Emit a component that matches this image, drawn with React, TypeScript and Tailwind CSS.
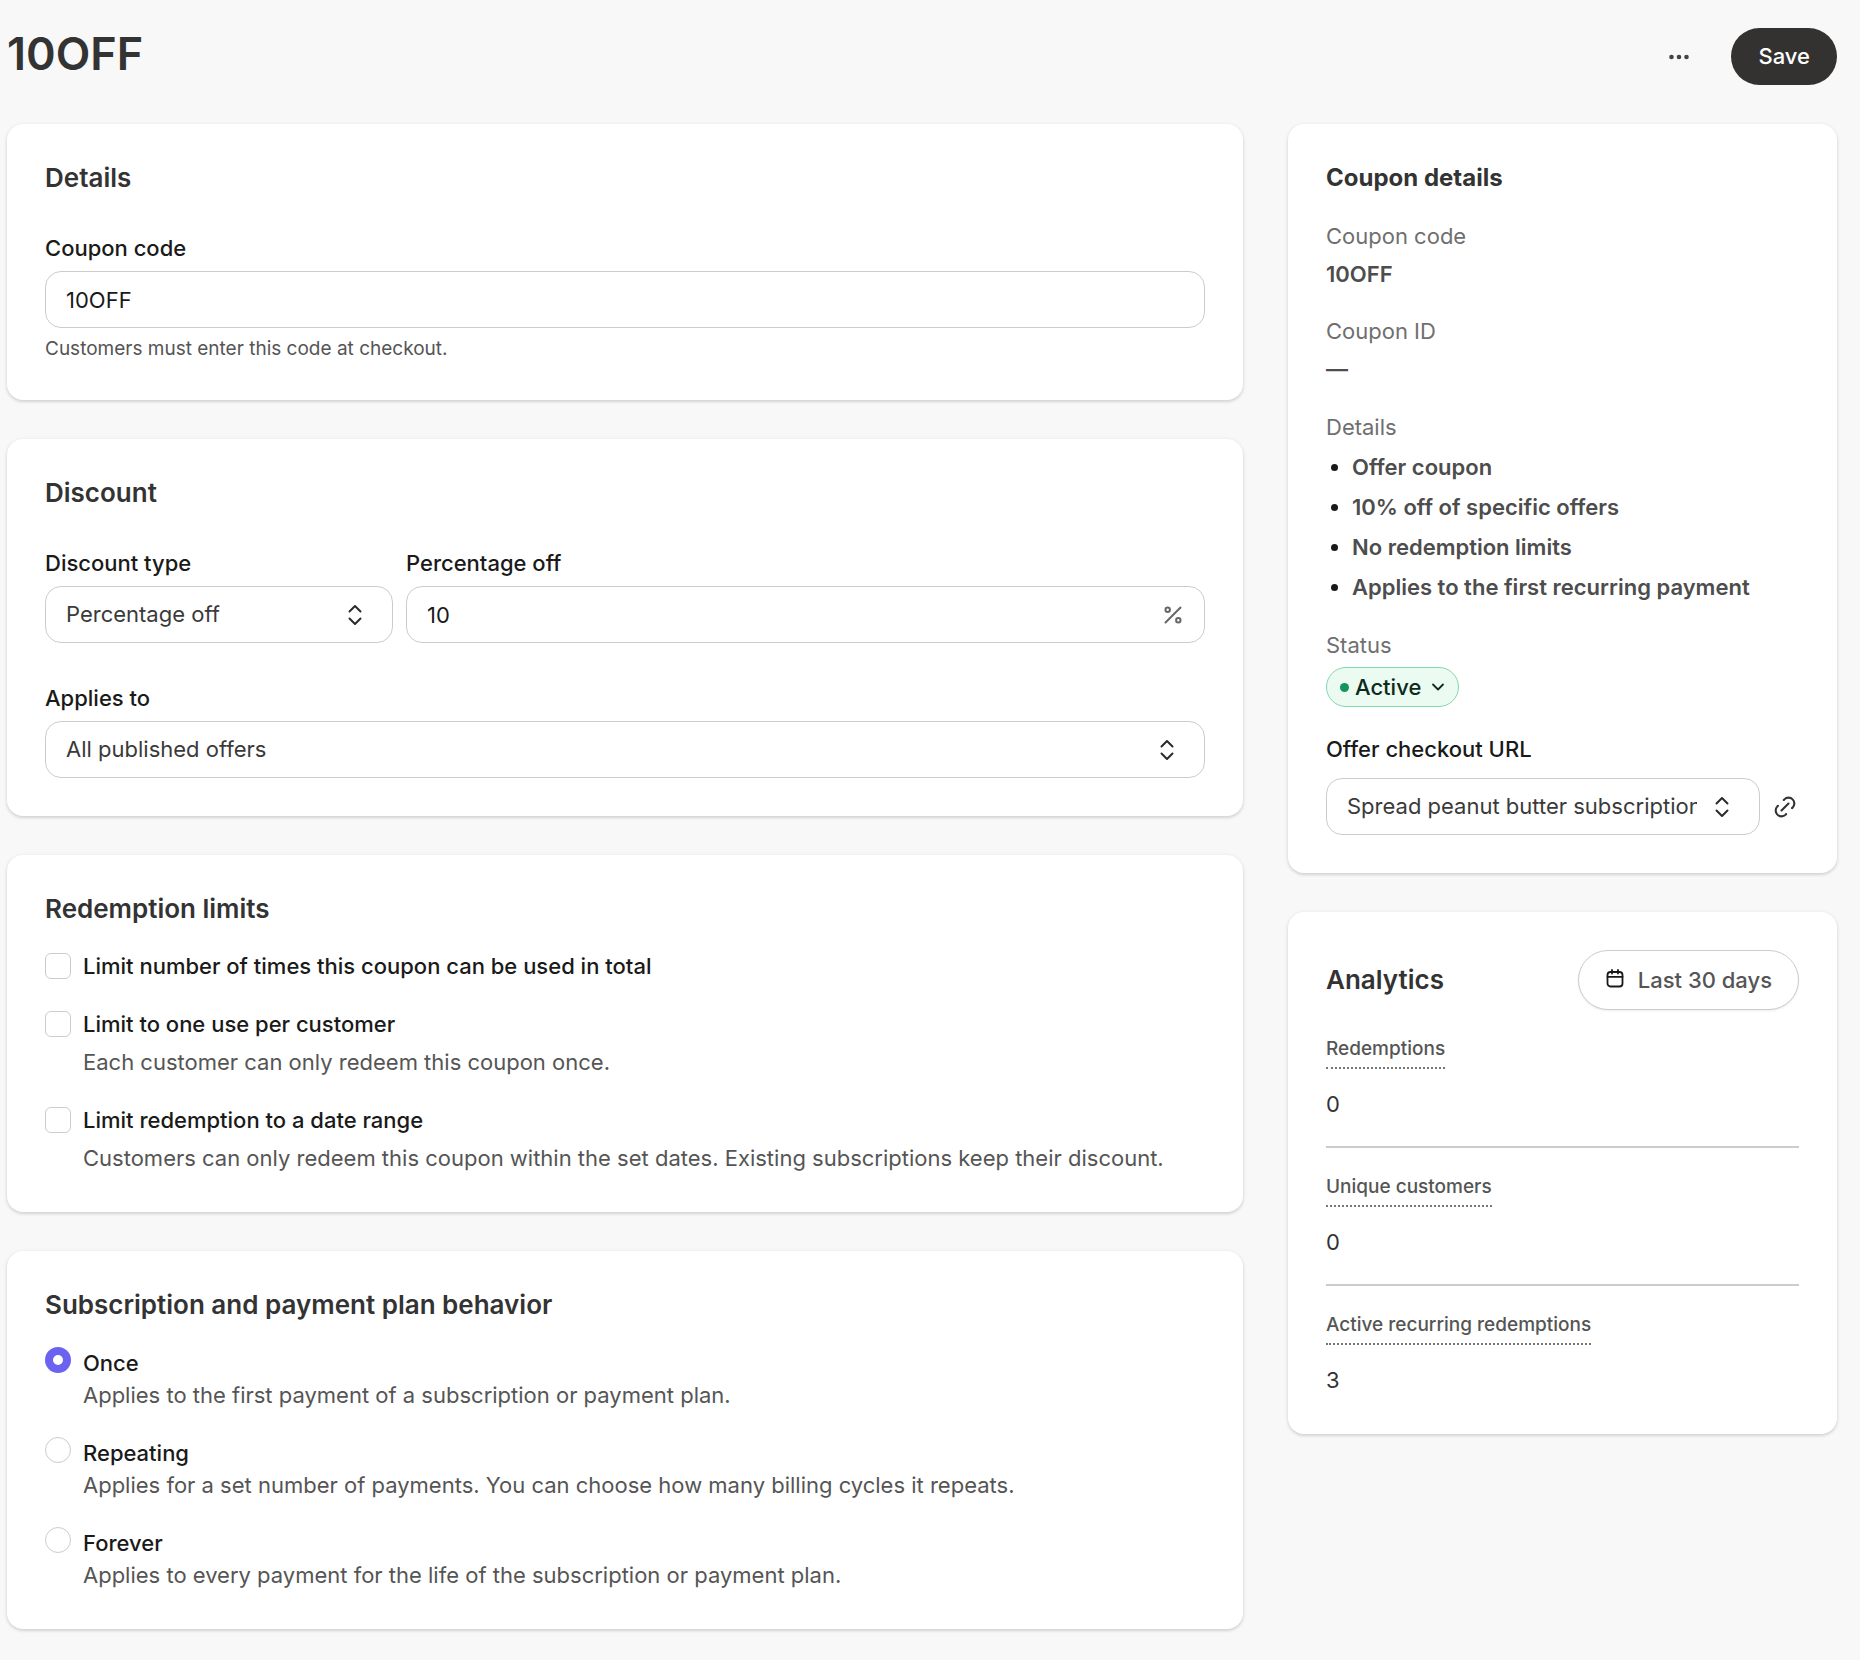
import { useState } from "react";
import type { ReactNode } from "react";

function Card({ children }: { children: ReactNode }) {
  return (
    <section className="rounded-2xl bg-white p-[38px] shadow-[0_1px_4px_rgba(0,0,0,0.11),0_2px_3px_rgba(0,0,0,0.08)]">
      {children}
    </section>
  );
}

function Heading({ children }: { children: ReactNode }) {
  return <h2 className="text-[26px] leading-8 font-semibold text-[#333333]">{children}</h2>;
}

function UpDown() {
  return (
    <svg width="16" height="22" viewBox="0 0 16 22" fill="none" stroke="#2b2b2b" strokeWidth="2" strokeLinecap="round" strokeLinejoin="round" aria-hidden="true">
      <path d="M2.5 7.5 8 2l5.5 5.5M2.5 14.500 8 20l5.500-5.500" />
    </svg>
  );
}

function SelectBox({ id, options }: { id: string; options: string[] }) {
  return (
    <div className="relative">
      <select
        id={id}
        className="block h-[57px] w-full appearance-none rounded-2xl border border-[#cccccc] bg-white pr-[62px] pl-5 text-[22px] text-[#3a3a3a]"
      >
        {options.map((o) => (
          <option key={o}>{o}</option>
        ))}
      </select>
      <span className="pointer-events-none absolute inset-y-0 right-[30px] flex items-center">
        <UpDown />
      </span>
    </div>
  );
}

const labelClass = "block text-[22px] leading-8 font-medium text-[#1a1a1a]";

const limits = [
  { id: "limit-total", label: "Limit number of times this coupon can be used in total", hint: "" },
  { id: "limit-customer", label: "Limit to one use per customer", hint: "Each customer can only redeem this coupon once." },
  {
    id: "limit-dates",
    label: "Limit redemption to a date range",
    hint: "Customers can only redeem this coupon within the set dates. Existing subscriptions keep their discount.",
  },
];

const durations = [
  { id: "once", label: "Once", hint: "Applies to the first payment of a subscription or payment plan." },
  { id: "repeating", label: "Repeating", hint: "Applies for a set number of payments. You can choose how many billing cycles it repeats." },
  { id: "forever", label: "Forever", hint: "Applies to every payment for the life of the subscription or payment plan." },
];

const metrics = [
  { label: "Redemptions", value: "0" },
  { label: "Unique customers", value: "0" },
  { label: "Active recurring redemptions", value: "3" },
];

const facts = ["Offer coupon", "10% off of specific offers", "No redemption limits", "Applies to the first recurring payment"];

export default function App() {
  const [duration, setDuration] = useState("once");
  const muted = "text-[22px] leading-8 text-[#6f6f6f]";
  const strong = "text-[22px] leading-8 font-semibold text-[#4d4d4d]";

  return (
    <div className="min-h-screen bg-[#f8f8f8] pt-7 pr-[23px] pb-8 pl-[7px] font-['Inter',sans-serif] text-[#1a1a1a]">
      <header className="flex items-start justify-between">
        <h1 className="text-[45px] leading-[52px] font-semibold text-[#333333]">10OFF</h1>
        <div className="flex items-center gap-6">
          <button type="button" aria-label="More actions" className="flex h-[57px] w-14 items-center justify-center">
            <svg width="22" height="6" viewBox="0 0 22 6" fill="#444444" aria-hidden="true">
              <circle cx="3.500" cy="3" r="2.300" />
              <circle cx="11" cy="3" r="2.300" />
              <circle cx="18.500" cy="3" r="2.300" />
            </svg>
          </button>
          <button type="button" className="h-[57px] rounded-full bg-[#333230] px-[27px] text-[22px] font-medium text-white">
            Save
          </button>
        </div>
      </header>

      <main className="mt-[39px] flex items-start gap-[45px]">
        <div className="flex min-w-0 flex-1 flex-col gap-[39px]">
          <Card>
            <Heading>Details</Heading>
            <label htmlFor="code" className={labelClass + " mt-[38px]"}>
              Coupon code
            </label>
            <input
              id="code"
              type="text"
              defaultValue="10OFF"
              className="mt-[7px] block h-[57px] w-full rounded-2xl border border-[#cccccc] bg-white px-5 text-[22px]"
            />
            <p className="mt-2 text-[19px] leading-[26px] text-[#555555]">Customers must enter this code at checkout.</p>
          </Card>

          <Card>
            <Heading>Discount</Heading>
            <div className="mt-[38px] flex gap-[13px]">
              <div className="w-[30%]">
                <label htmlFor="type" className={labelClass + " mb-[7px]"}>
                  Discount type
                </label>
                <SelectBox id="type" options={["Percentage off", "Fixed amount"]} />
              </div>
              <div className="flex-1">
                <label htmlFor="amount" className={labelClass + " mb-[7px]"}>
                  Percentage off
                </label>
                <div className="relative">
                  <input
                    id="amount"
                    type="text"
                    defaultValue="10"
                    className="block h-[57px] w-full rounded-2xl border border-[#cccccc] bg-white pr-14 pl-5 text-[22px]"
                  />
                  <span className="pointer-events-none absolute inset-y-0 right-[22px] flex items-center">
                    <svg width="20" height="20" viewBox="0 0 20 20" fill="none" stroke="#666666" strokeWidth="2" strokeLinecap="round" aria-hidden="true">
                      <path d="M2.500 17.500 17.500 2.500" />
                      <circle cx="4.700" cy="4.700" r="2.200" />
                      <circle cx="15.300" cy="15.300" r="2.200" />
                    </svg>
                  </span>
                </div>
              </div>
            </div>
            <label htmlFor="applies" className={labelClass + " mt-[39px] mb-[7px]"}>
              Applies to
            </label>
            <SelectBox id="applies" options={["All published offers", "Specific offers"]} />
          </Card>

          <Card>
            <Heading>Redemption limits</Heading>
            <div className="mt-[25px] flex flex-col gap-[26px]">
              {limits.map((l) => (
                <div key={l.id} className="flex gap-3">
                  <input
                    id={l.id}
                    type="checkbox"
                    className="mt-[3px] size-[26px] shrink-0 appearance-none rounded-md border border-[#cccccc] bg-white checked:border-[#6b63f0] checked:bg-[#6b63f0]"
                  />
                  <div>
                    <label htmlFor={l.id} className={labelClass}>
                      {l.label}
                    </label>
                    {l.hint && <p className="mt-[6px] text-[22px] leading-8 text-[#555555]">{l.hint}</p>}
                  </div>
                </div>
              ))}
            </div>
          </Card>

          <Card>
            <Heading>Subscription and payment plan behavior</Heading>
            <div className="mt-[26px] flex flex-col gap-[26px]">
              {durations.map((d) => (
                <div key={d.id} className="flex gap-3">
                  <input
                    id={d.id}
                    type="radio"
                    name="duration"
                    checked={duration === d.id}
                    onChange={() => setDuration(d.id)}
                    className="size-[26px] shrink-0 appearance-none rounded-full border border-[#cccccc] bg-white checked:border-8 checked:border-[#6b63f0]"
                  />
                  <div>
                    <label htmlFor={d.id} className={labelClass}>
                      {d.label}
                    </label>
                    <p className="text-[22px] leading-8 text-[#555555]">{d.hint}</p>
                  </div>
                </div>
              ))}
            </div>
          </Card>
        </div>

        <aside className="flex w-[30%] flex-col gap-[39px]">
          <Card>
            <h2 className="text-[24px] leading-8 font-bold text-[#333333]">Coupon details</h2>
            <dl className="mt-[26px]">
              <dt className={muted}>Coupon code</dt>
              <dd className={strong + " mt-[6px]"}>10OFF</dd>
              <dt className={muted + " mt-[25px]"}>Coupon ID</dt>
              <dd className={strong + " mt-[6px]"}>—</dd>
              <dt className={muted + " mt-[26px]"}>Details</dt>
              <dd className="mt-1">
                <ul className="list-disc pl-[26px] text-[22px] leading-10">
                  {facts.map((f) => (
                    <li key={f}>
                      <span className="font-semibold text-[#4d4d4d]">{f}</span>
                    </li>
                  ))}
                </ul>
              </dd>
              <dt className={muted + " mt-[22px]"}>Status</dt>
              <dd className="mt-[6px]">
                <button
                  type="button"
                  className="flex h-10 items-center rounded-full border border-[#84d8ab] bg-[#ebfbf2] px-[13px] text-[22px] font-medium text-[#0c2b1b]"
                >
                  <span className="mr-[6px] size-[9px] rounded-full bg-[#12945a]" />
                  Active
                  <svg width="14" height="10" viewBox="0 0 14 10" fill="none" stroke="#0c2b1b" strokeWidth="1.800" strokeLinecap="round" strokeLinejoin="round" className="ml-[10px]" aria-hidden="true">
                    <path d="M2 2.500 7 7.500l5-5" />
                  </svg>
                </button>
              </dd>
            </dl>
            <label htmlFor="url" className={labelClass + " mt-[26px] mb-[13px]"}>
              Offer checkout URL
            </label>
            <div className="flex items-center gap-[11px]">
              <div className="min-w-0 flex-1">
                <SelectBox id="url" options={["Spread peanut butter subscription"]} />
              </div>
              <button type="button" aria-label="Copy link" className="shrink-0">
                <svg width="28" height="28" viewBox="0 0 24 24" fill="none" stroke="#333333" strokeWidth="1.800" strokeLinecap="round" strokeLinejoin="round" aria-hidden="true">
                  <path d="M9 15l6-6M11 6l.463-.536a5 5 0 0 1 7.071 7.072L18 13M13 18l-.397.534a5.068 5.068 0 0 1-7.127 0 4.972 4.972 0 0 1 0-7.071L6 11" />
                </svg>
              </button>
            </div>
          </Card>

          <Card>
            <div className="flex items-center justify-between">
              <Heading>Analytics</Heading>
              <button
                type="button"
                className="flex h-[60px] items-center gap-[13px] rounded-full border border-[#cccccc] bg-white px-[26px] text-[22px] font-medium text-[#555555] shadow-[0_1px_2px_rgba(0,0,0,0.08)]"
              >
                <svg width="20" height="20" viewBox="0 0 20 20" fill="none" stroke="#1a1a1a" strokeWidth="1.800" strokeLinecap="round" strokeLinejoin="round" className="mb-1" aria-hidden="true">
                  <rect x="2.500" y="4" width="15" height="14.500" rx="3" />
                  <path d="M2.500 8.800h15M7 2v3.500M13 2v3.500" />
                </svg>
                Last 30 days
              </button>
            </div>
            <dl className="mt-[25px]">
              {metrics.map((m) => (
                <div key={m.label} className="mb-[25px] border-b-2 border-[#cccccc] pb-[26px] last:mb-0 last:border-b-0 last:pb-0">
                  <dt className="flex">
                    <span className="border-b-2 border-dotted border-[#777777] pb-1 text-[19px] leading-7 font-medium text-[#555555]">{m.label}</span>
                  </dt>
                  <dd className="mt-[19px] text-[22px] leading-8 text-[#333333]">{m.value}</dd>
                </div>
              ))}
            </dl>
          </Card>
        </aside>
      </main>
    </div>
  );
}
